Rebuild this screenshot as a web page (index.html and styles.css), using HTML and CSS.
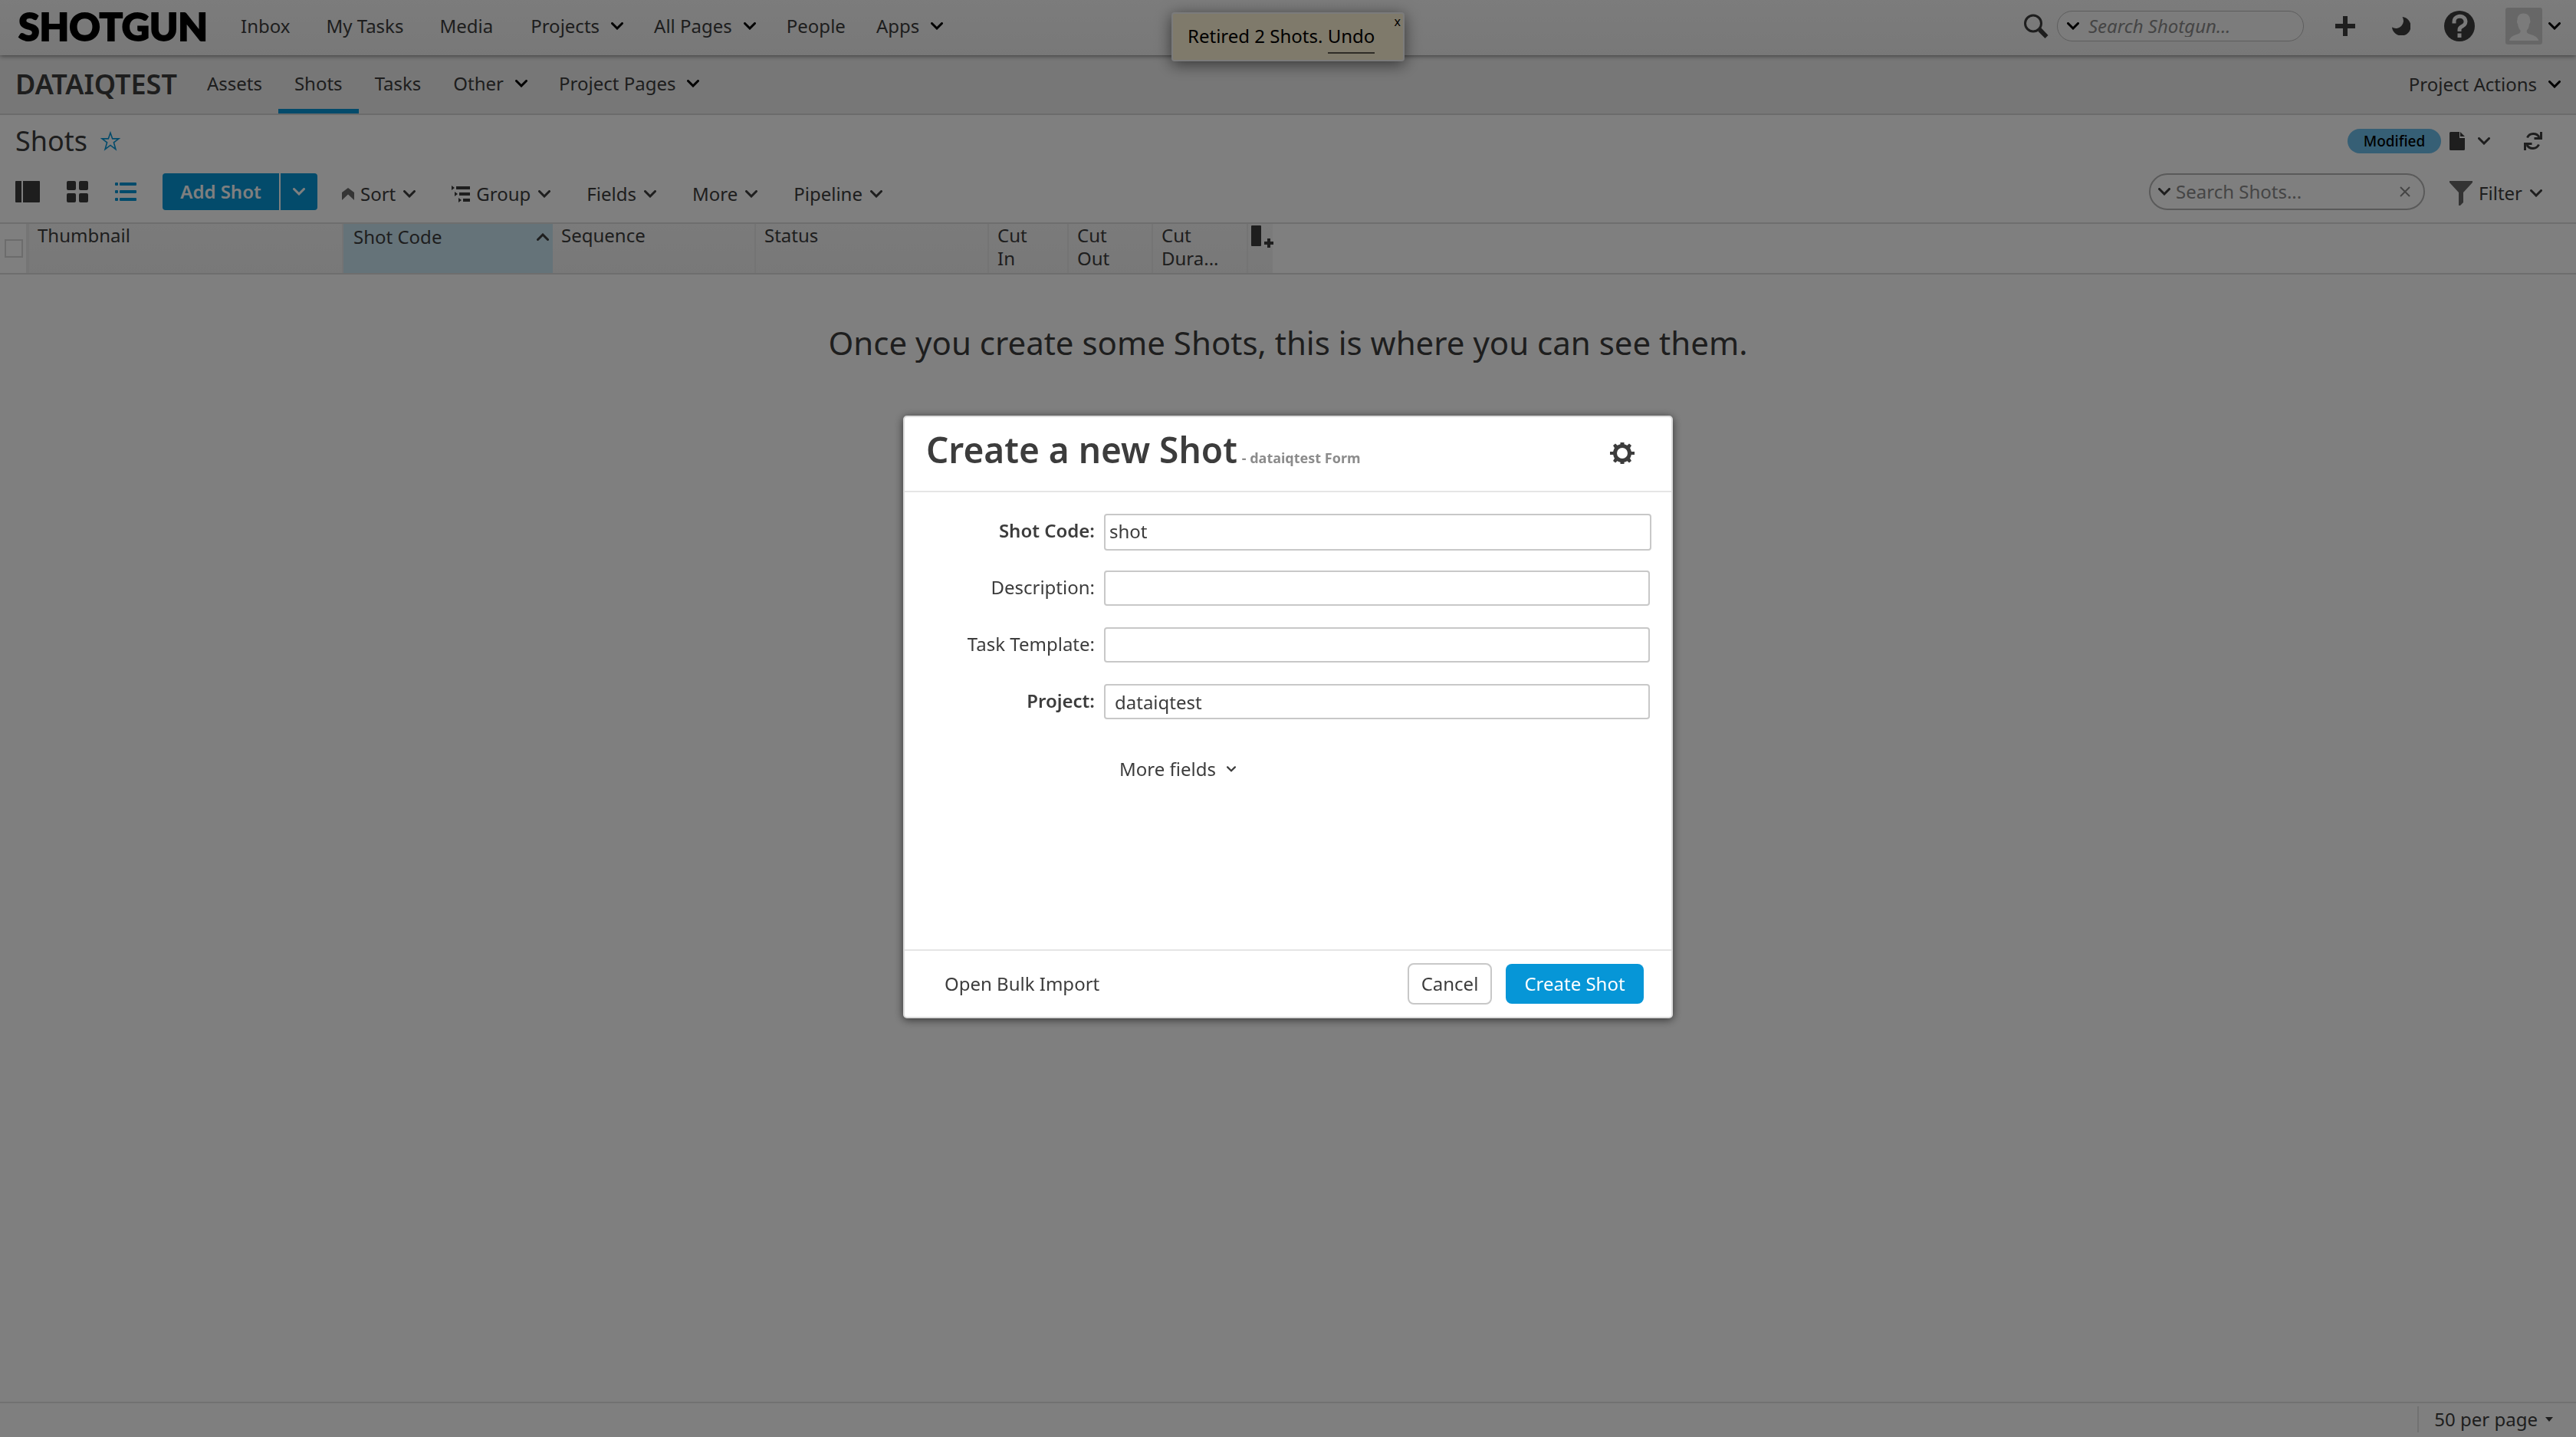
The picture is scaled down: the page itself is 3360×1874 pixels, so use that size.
FILE: index.html
```html
<!DOCTYPE html>
<html lang="en">
<head>
<meta charset="utf-8">
<title>Shots - dataiqtest</title>
<link rel="stylesheet" href="styles.css">
</head>
<body>
<svg class="sprite" aria-hidden="true">
  <symbol id="chevron" viewBox="0 0 16 10"><path d="M1.5 1.5 8 8l6.5-6.5" fill="none" stroke="currentColor" stroke-width="3" stroke-linecap="round"/></symbol>
</svg>

<div class="page">
  <header class="topbar">
    <a class="logo" href="#">SHOTGUN</a>
    <nav class="topnav">
      <a href="#">Inbox</a>
      <a href="#">My Tasks</a>
      <a href="#">Media</a>
    </nav>
    <nav class="topnav topnav-menus">
      <button class="menu" type="button">Projects <svg class="chev"><use href="#chevron"/></svg></button>
      <button class="menu" type="button">All Pages <svg class="chev"><use href="#chevron"/></svg></button>
      <a href="#">People</a>
      <button class="menu" type="button">Apps <svg class="chev"><use href="#chevron"/></svg></button>
    </nav>
    <div class="topbar-right">
      <svg class="magnifier" viewBox="0 0 32 32"><circle cx="12" cy="12.5" r="10.5" fill="none" stroke="currentColor" stroke-width="3"/><path d="M20 20l2-2 9.500 10-4 4L18.500 23z" fill="currentColor"/></svg>
      <label class="search search-global">
        <svg class="chev"><use href="#chevron"/></svg>
        <input type="text" placeholder="Search Shotgun..." aria-label="Search Shotgun">
      </label>
      <button class="icon-btn add-btn" type="button" aria-label="Create">
        <svg width="26" height="26" viewBox="0 0 26 26"><path d="M10 0h6v10h10v6H16v10h-6V16H0v-6h10z" fill="currentColor"/></svg>
      </button>
      <button class="icon-btn theme-btn" type="button" aria-label="Theme">
        <svg width="24" height="24" viewBox="0 0 24 24"><path d="M13.5 0A12.3 12.3 0 1 1 0 13.5 9.800 9.800 0 0 0 13.500 0z" fill="currentColor"/></svg>
      </button>
      <button class="icon-btn help-btn" type="button" aria-label="Help">
        <svg width="40" height="40" viewBox="0 0 40 40"><circle cx="20" cy="20" r="20" fill="currentColor"/><path d="M13 16.5v-2a7.500 6.800 0 1 1 11 5.500c-2.600 1.300-4 2.200-4 4.500V27" fill="none" stroke="#f5f5f5" stroke-width="5"/><path d="M17.500 29.500h5v5.500h-5z" fill="#f5f5f5"/></svg>
      </button>
      <button class="icon-btn user-btn" type="button" aria-label="Account">
        <svg width="48" height="48" viewBox="0 0 48 48"><rect width="48" height="48" rx="3" fill="#cfcfcf"/><path d="M5 43c1-5 6-7 11-8.500 3-1 4-2 3.500-5-2-2-3-4.500-3.300-8C15 20.500 14.500 17.500 15.500 16c0-5.500 3-8.500 8-8.500s8.500 3 8.500 8.500c1 1.500.3 4.500-1 5.500-.2 3.500-1.200 6-3.200 8-.5 3 .5 4 3.500 5 5 1.500 10.500 3.500 12 8.500z" fill="#f7f7f7"/></svg>
        <svg class="chev"><use href="#chevron"/></svg>
      </button>
    </div>
  </header>

  <div class="projectbar">
    <a class="project-name" href="#">DATAIQTEST</a>
    <nav class="tabs">
      <a class="tab" href="#">Assets</a>
      <a class="tab tab-active" href="#">Shots</a>
      <a class="tab" href="#">Tasks</a>
      <button class="tab menu" type="button">Other <svg class="chev"><use href="#chevron"/></svg></button>
      <button class="tab menu" type="button">Project Pages <svg class="chev"><use href="#chevron"/></svg></button>
    </nav>
    <button class="menu project-actions" type="button">Project Actions <svg class="chev"><use href="#chevron"/></svg></button>
  </div>

  <div class="titlebar">
    <h1>Shots</h1>
    <button class="icon-btn star-btn" type="button" aria-label="Favorite">
      <svg width="26" height="26" viewBox="0 0 26 26"><path d="M13 2.200l2.700 7.700h8.200l-6.500 4.900 2.500 8.900-6.900-5.300-6.900 5.300 2.500-8.900L2.100 9.900h8.200z" fill="none" stroke="currentColor" stroke-width="1.600"/></svg>
    </button>
    <div class="page-status">
      <button class="badge" type="button">Modified</button>
      <button class="icon-btn file-btn" type="button" aria-label="Page">
        <svg width="20" height="24" viewBox="0 0 20 24"><path d="M1.500 0H13v8h7v14.500a1.500 1.500 0 0 1-1.500 1.500h-17A1.500 1.500 0 0 1 0 22.500v-21A1.500 1.500 0 0 1 1.500 0zM14 0l6 6h-6z" fill="currentColor"/></svg>
        <svg class="chev"><use href="#chevron"/></svg>
      </button>
      <button class="icon-btn" type="button" aria-label="Refresh">
        <svg width="24" height="24" viewBox="0 0 24 24"><path d="M4.500 7.500A8.500 8 0 0 1 20 7M19.500 16.500A8.500 8 0 0 1 4 17" fill="none" stroke="currentColor" stroke-width="3"/><path d="M24 0v10H13.500V7H21V0zM0 24V14h10.500v3H3v7z" fill="currentColor"/></svg>
      </button>
    </div>
  </div>

  <div class="toolbar">
    <div class="views">
      <button class="icon-btn" type="button" aria-label="Detail view">
        <svg width="32" height="28" viewBox="0 0 32 28"><path d="M1 0h7v28H1a1 1 0 0 1-1-1V1a1 1 0 0 1 1-1zM10 0h21a1 1 0 0 1 1 1v26a1 1 0 0 1-1 1H10z" fill="currentColor"/></svg>
      </button>
      <button class="icon-btn" type="button" aria-label="Thumbnail view">
        <svg width="28" height="28" viewBox="0 0 28 28" fill="currentColor"><rect width="12" height="12" rx="2"/><rect x="16" width="12" height="12" rx="2"/><rect y="16" width="12" height="12" rx="2"/><rect x="16" y="16" width="12" height="12" rx="2"/></svg>
      </button>
      <button class="icon-btn view-active" type="button" aria-label="List view">
        <svg width="28" height="24" viewBox="0 0 28 24" fill="currentColor"><rect width="4" height="4" rx="1"/><rect x="6" width="22" height="4" rx="1"/><rect y="10" width="4" height="4" rx="1"/><rect x="6" y="10" width="22" height="4" rx="1"/><rect y="20" width="4" height="4" rx="1"/><rect x="6" y="20" width="22" height="4" rx="1"/></svg>
      </button>
    </div>
    <div class="split">
      <button class="split-main" type="button">Add Shot</button>
      <button class="split-more" type="button" aria-label="More add options"><svg class="chev"><use href="#chevron"/></svg></button>
    </div>
    <div class="tools">
      <button class="tool" type="button">
        <svg class="tool-icon" width="16" height="16" viewBox="0 0 16 16"><path d="M8 0l8 6v10l-8-7.500L0 16V6z" fill="#6a6a6a"/></svg>Sort <svg class="chev"><use href="#chevron"/></svg>
      </button>
      <button class="tool" type="button">
        <svg class="tool-icon" width="24" height="22" viewBox="0 0 24 22" fill="currentColor"><path d="M6 1h18v4H6zM10 9h14v4H10zM15 17h9v4h-9zM0 0l4 3-4 3zM4 8l4 3-4 3zM9 16l4 3-4 3z"/></svg>Group <svg class="chev"><use href="#chevron"/></svg>
      </button>
      <button class="tool" type="button">Fields <svg class="chev"><use href="#chevron"/></svg></button>
      <button class="tool" type="button">More <svg class="chev"><use href="#chevron"/></svg></button>
      <button class="tool" type="button">Pipeline <svg class="chev"><use href="#chevron"/></svg></button>
    </div>
    <div class="toolbar-right">
      <label class="search search-shots">
        <svg class="chev"><use href="#chevron"/></svg>
        <input type="text" placeholder="Search Shots..." aria-label="Search Shots">
        <svg class="clear" width="14" height="14" viewBox="0 0 14 14"><path d="M1 1l12 12M13 1L1 13" stroke="currentColor" stroke-width="2"/></svg>
      </label>
      <div class="filter">
        <svg width="30" height="32" viewBox="0 0 30 32"><path d="M0 0h30v2L18 15v13l-4 4h-2V15L0 2z" fill="#666"/></svg>
        <button class="tool" type="button">Filter <svg class="chev"><use href="#chevron"/></svg></button>
      </div>
    </div>
  </div>

  <div class="grid-head">
    <table>
      <colgroup><col class="c-check"><col class="c-thumb"><col class="c-code"><col class="c-seq"><col class="c-status"><col class="c-in"><col class="c-out"><col class="c-dur"><col class="c-add"></colgroup>
      <thead>
        <tr>
          <th class="th-check"><input type="checkbox" aria-label="Select all"></th>
          <th>Thumbnail</th>
          <th class="th-sorted"><span class="sorted">Shot Code <svg class="chev chev-up"><use href="#chevron"/></svg></span></th>
          <th>Sequence</th>
          <th>Status</th>
          <th>Cut<br>In</th>
          <th>Cut<br>Out</th>
          <th>Cut<br>Dura...</th>
          <th class="th-add"><button class="icon-btn" type="button" aria-label="Add column"><svg width="29" height="30" viewBox="0 0 29 30" fill="currentColor"><rect width="13" height="27" rx="1"/><path d="M21 17h4v4h4v4h-4v4h-4v-4h-4v-4h4z"/></svg></button></th>
        </tr>
      </thead>
    </table>
  </div>

  <main class="empty">
    <p>Once you create some Shots, this is where you can see them.</p>
  </main>

  <footer class="statusbar">
    <button class="per-page" type="button">50 per page <svg width="10" height="6" viewBox="0 0 10 6"><path d="M0 0h10L5 6z" fill="currentColor"/></svg></button>
  </footer>
</div>

<div class="toast" role="status">
  <span>Retired 2 Shots. <a href="#">Undo</a></span>
  <button class="toast-close" type="button" aria-label="Dismiss">x</button>
</div>

<div class="backdrop">
  <form class="dialog" role="dialog" aria-labelledby="dialog-title">
    <header class="dialog-head">
      <h2 id="dialog-title">Create a new Shot <small>- dataiqtest Form</small></h2>
      <button class="icon-btn" type="button" aria-label="Settings">
        <svg width="32" height="30" viewBox="0 0 32 30"><circle cx="16" cy="15" r="9.500" fill="none" stroke="currentColor" stroke-width="5"/><g fill="currentColor"><path d="M13.500 1h5v4h-5zM13.500 25h5v4h-5zM0 13h5v4H0zM27 13h5v4h-5z"/><path d="M4 5l3-2.500 4 3.500-4 4zM28 5l-3-2.500L21 6l4 4zM4 25l3 2.500 4-3.500-4-4zM28 25l-3 2.500-4-3.500 4-4z"/></g></svg>
      </button>
    </header>
    <div class="fields">
      <label class="required" for="code">Shot Code:</label>
      <input class="field-focus" id="code" type="text" value="shot">
      <label for="description">Description:</label>
      <input id="description" type="text">
      <label for="template">Task Template:</label>
      <input id="template" type="text">
      <label class="required" for="project">Project:</label>
      <input id="project" type="text" value="dataiqtest">
      <button class="more-fields" type="button">More fields <svg class="chev-small"><use href="#chevron"/></svg></button>
    </div>
    <footer class="dialog-foot">
      <a href="#">Open Bulk Import</a>
      <button class="btn btn-cancel" type="button">Cancel</button>
      <button class="btn btn-create" type="submit">Create Shot</button>
    </footer>
  </form>
</div>
</body>
</html>
```
FILE: styles.css
```css
* { box-sizing: border-box; }

body {
  margin: 0;
  background: #fff;
  color: #3c3c3c;
  font: 24px/28px "Noto Sans", "Open Sans", sans-serif;
}

button, input {
  margin: 0;
  padding: 0;
  border: 0;
  background: none;
  color: inherit;
  font: inherit;
}

a { color: inherit; text-decoration: none; }
svg { display: block; flex: none; }
.sprite { display: none; }
.chev { width: 16px; height: 10px; }
.icon-btn { display: flex; align-items: center; }

.page {
  display: flex;
  flex-direction: column;
  min-height: 100vh;
}

/* Global navigation */
.topbar {
  position: relative;
  display: flex;
  align-items: center;
  height: 72px;
  padding: 0 20px 4px 24px;
  background: linear-gradient(#f8f8f8, #f1f1f1);
  box-shadow: 0 1px 6px rgba(0, 0, 0, .5);
}

.logo {
  width: 290px;
  color: #000;
  font: 900 50px/60px Lato, sans-serif;
  -webkit-text-stroke: 2px #000;
}

.topnav { display: flex; align-items: center; gap: 47px; }
.topnav-menus { gap: 40px; margin-left: 49px; }
.menu { display: flex; align-items: center; gap: 15px; }
.menu .chev, .user-btn .chev, .search-global .chev { color: #000; }

.topbar-right { display: flex; align-items: center; margin-left: auto; }
.magnifier { width: 32px; height: 32px; margin-right: 11px; }

.search { display: flex; align-items: center; }
.search input { flex: 1; min-width: 0; outline: 0; }
.search input::placeholder { color: #8a8a8a; opacity: 1; }

.search-global {
  width: 322px;
  height: 40px;
  gap: 12px;
  padding: 0 12px;
  border: 1px solid #bbb;
  border-radius: 20px;
  background: #f9f9f9;
}
.search-global input { font-style: italic; }

.add-btn { margin-left: 41px; }
.theme-btn { margin-left: 48px; }
.help-btn { margin-left: 44px; }
.user-btn { gap: 8px; margin-left: 40px; }

/* Project navigation */
.projectbar {
  display: flex;
  align-items: center;
  height: 78px;
  padding: 0 20px;
  border-bottom: 2px solid #d6d6d6;
  background: #efefef;
}

.project-name { font-size: 36px; font-weight: 600; line-height: 44px; }
.tabs { display: flex; align-self: stretch; margin-left: 18px; }
.tab {
  display: flex;
  align-items: center;
  padding: 4px 21px 0;
  border-bottom: 6px solid transparent;
}
.tab.menu { padding-right: 20px; }
.tab-active { border-bottom-color: #0696d7; }
.project-actions { margin-left: auto; }

/* Page title */
.titlebar {
  display: flex;
  align-items: center;
  height: 68px;
  padding: 0 44px 0 20px;
}
h1 { margin: 0; font-size: 36px; font-weight: 400; line-height: 44px; }
.star-btn { margin-left: 17px; color: #0696d7; }

.page-status { display: flex; align-items: center; margin-left: auto; }
.badge {
  width: 122px;
  height: 32px;
  border-radius: 16px;
  background: #6cbeea;
  color: #000;
  font-size: 19px;
  font-weight: 500;
  line-height: 28px;
}
.file-btn { gap: 17px; margin: 0 44px 0 11px; }

/* Toolbar */
.toolbar {
  display: flex;
  align-items: center;
  height: 72px;
  padding: 0 44px 8px 20px;
}
.views { display: flex; align-items: center; gap: 35px; }
.view-active { color: #0696d7; }

.split { display: flex; gap: 2px; margin-left: 34px; color: #fff; }
.split button { height: 48px; background: #0696d7; }
.split-main { width: 152px; border-radius: 4px 0 0 4px; font-weight: 600; }
.split-more {
  display: flex;
  align-items: center;
  justify-content: center;
  width: 48px;
  border-radius: 0 4px 4px 0;
}

.tools { display: flex; gap: 47px; margin: 6px 0 0 32px; }
.tool { display: flex; align-items: center; gap: 10px; }
.tool-icon { margin-right: -2px; }

.toolbar-right { display: flex; align-items: center; margin-left: auto; }
.search-shots {
  width: 360px;
  height: 48px;
  gap: 7px;
  padding: 0 17px 0 10px;
  border: 2px solid #b4b4b4;
  border-radius: 24px;
  background: #fff;
}
.clear { color: #8a8a8a; }
.filter { display: flex; align-items: center; gap: 8px; margin: 4px 0 0 32px; }

/* Column headings */
.grid-head { border-top: 2px solid #dcdcdc; border-bottom: 2px solid #dcdcdc; }
table { width: 1660px; border-collapse: collapse; table-layout: fixed; }
.c-check { width: 38px; }
.c-thumb { width: 410px; }
.c-code { width: 273px; }
.c-seq { width: 265px; }
.c-status { width: 304px; }
.c-in { width: 104px; }
.c-out { width: 110px; }
.c-dur { width: 124px; }
.c-add { width: 32px; }
th {
  height: 64px;
  padding: 0 0 0 11px;
  background: linear-gradient(#f6f6f6, #f1f1f1);
  box-shadow: inset -2px 0 #e8e8e8;
  font-weight: 400;
  line-height: 30px;
  text-align: left;
  vertical-align: top;
}
.th-check { padding: 20px 0 0 6px; background: #fff; box-shadow: inset -4px 0 #ebebeb; }
.th-check input {
  display: block;
  width: 24px;
  height: 24px;
  border: 2px solid #d8d8d8;
  appearance: none;
}
.th-sorted { padding: 2px 5px 0 13px; background: #cae6f3; box-shadow: none; }
.sorted { display: flex; align-items: center; justify-content: space-between; }
.chev-up { transform: rotate(180deg); }
.th-add { padding: 2px 0 0 4px; box-shadow: none; }

.empty { flex: 1; padding-top: 59px; text-align: center; }
.empty p { margin: 0; font-size: 42px; line-height: 60px; }

/* Paging bar */
.statusbar {
  display: flex;
  justify-content: flex-end;
  height: 46px;
  padding: 4px 30px 6px;
  border-top: 2px solid #e3e3e3;
}
.per-page {
  display: flex;
  align-items: center;
  gap: 10px;
  padding-left: 20px;
  border-left: 2px solid #e3e3e3;
}

/* Notification over the global navigation */
.toast {
  position: absolute;
  top: 16px;
  left: 50%;
  display: flex;
  align-items: center;
  width: 304px;
  height: 64px;
  padding: 0 0 2px 19px;
  border: 2px solid #f6f6f6;
  border-radius: 4px;
  background: #fff4d6;
  box-shadow: 0 4px 20px rgba(0, 0, 0, .55);
  color: #000;
  transform: translateX(-50%);
}
.toast a { padding-bottom: 5px; border-bottom: 2px solid #5c584d; }
.toast-close {
  position: absolute;
  top: 0;
  right: 3px;
  font-size: 16px;
  line-height: 20px;
}

/* Create dialog */
.backdrop {
  position: fixed;
  inset: 0;
  display: flex;
  align-items: center;
  justify-content: center;
  padding-bottom: 4px;
  background: rgba(0, 0, 0, .5);
}
.dialog {
  width: 1004px;
  border: 2px solid #dcdcdc;
  border-radius: 5px;
  background: #fff;
  box-shadow: 0 2px 12px rgba(0, 0, 0, .6);
}
.dialog-head {
  display: flex;
  align-items: center;
  justify-content: space-between;
  height: 98px;
  padding: 0 48px 2px 28px;
  border-bottom: 2px solid #e5e5e5;
}
h2 { margin: 0; font-size: 46px; font-weight: 600; line-height: 60px; }
h2 small { margin-left: -6px; color: #8c8c8c; font-size: 18px; font-weight: 700; }

.fields {
  display: grid;
  grid-template-columns: 248px 1fr;
  grid-auto-rows: 74px;
  align-items: start;
  column-gap: 12px;
  min-height: 596px;
  padding: 28px 28px 0 0;
}
.fields label { line-height: 44px; text-align: right; }
.required { font-weight: 600; }
.fields input {
  width: 100%;
  height: 46px;
  padding: 0 12px;
  border: 2px solid #c8c8c8;
  border-radius: 4px;
  outline: 0;
}
.fields .field-focus {
  width: calc(100% + 2px);
  height: 48px;
  padding: 0 5px 4px;
}
.more-fields {
  display: flex;
  grid-column: 2;
  align-items: center;
  gap: 14px;
  height: 46px;
  margin: 14px 0 0 20px;
}
.chev-small { width: 12px; height: 8px; }

.dialog-foot {
  display: flex;
  align-items: center;
  height: 88px;
  padding: 0 36px 0 52px;
  border-top: 2px solid #e5e5e5;
}
.dialog-foot a { margin-right: auto; }
.btn { height: 54px; border-radius: 8px; }
.btn-cancel { width: 110px; border: 2px solid #c8c8c8; }
.btn-create {
  width: 180px;
  height: 52px;
  margin-left: 18px;
  background: #0696d7;
  color: #fff;
}
```
